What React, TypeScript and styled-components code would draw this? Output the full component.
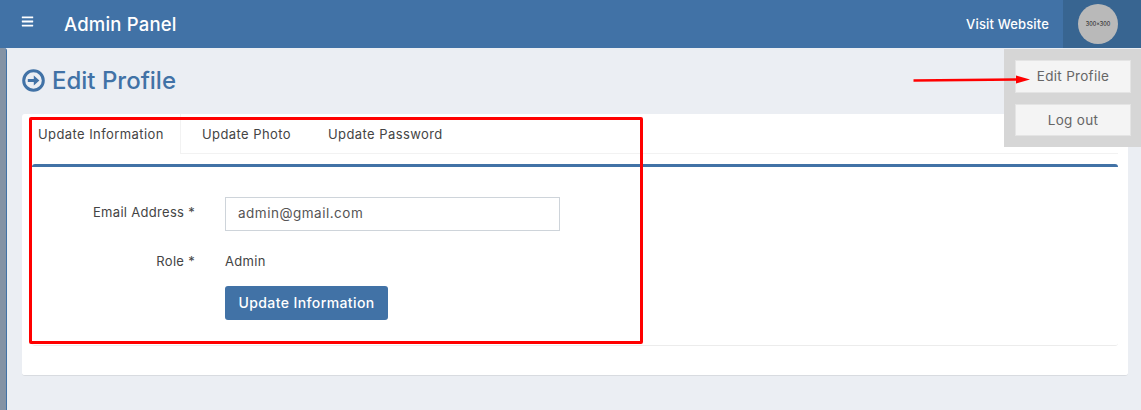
import styled, { createGlobalStyle } from 'styled-components'
import { FaBars } from 'react-icons/fa'

const PRIMARY = '#4172a6'
const FONT = '"Inter", "Liberation Sans", sans-serif'

const GlobalStyle = createGlobalStyle`
	html, body {
		margin: 0;
		padding: 0;
		background: #ebeef3;
		font-family: ${FONT};
		color: #444;
	}
	* {
		box-sizing: border-box;
	}
`

const Page = styled.div`
	position: relative;
	width: 1141px;
	height: 410px;
	overflow: hidden;
	display: flex;
	flex-direction: column;
`

const Header = styled.header`
	height: 48px;
	background: ${PRIMARY};
	display: flex;
	align-items: center;
	color: #fff;
	flex: none;
`

const MenuButton = styled.div`
	width: 64px;
	padding: 0 0 5px 21px;
	display: flex;
	font-size: 13px;
`

const Brand = styled.div`
	font-size: 18.5px;
	font-weight: 500;
	letter-spacing: 0.2px;
	flex: 1;
`

const VisitLink = styled.a`
	font-size: 13px;
	font-weight: 500;
	letter-spacing: 0.15px;
	margin-right: 14px;
`

const UserBox = styled.div`
	width: 78px;
	height: 48px;
	background: #386591;
	display: flex;
	align-items: center;
	padding-left: 15px;
`

const Avatar = styled.div`
	width: 40px;
	height: 40px;
	border-radius: 50%;
	background: #b9b9b9;
	color: #111;
	font-size: 5.5px;
	display: flex;
	align-items: center;
	justify-content: center;
`

const Body = styled.div`
	flex: 1;
	display: flex;
`

const SideEdge = styled.div`
	width: 7px;
	background: #8493a5;
	border-right: 1px solid ${PRIMARY};
	border-top-right-radius: 3px;
	flex: none;
`

const Main = styled.main`
	flex: 1;
	padding: 0 13px 0 15px;
`

const Title = styled.h1`
	height: 66px;
	margin: 0;
	padding-bottom: 1px;
	display: flex;
	align-items: center;
	gap: 7px;
	color: ${PRIMARY};
	font-size: 24px;
	font-weight: 500;
`

const Card = styled.section`
	height: 262px;
	background: #fff;
	border-radius: 3px;
	border-bottom: 1px solid #d8dbe0;
	padding: 0 10px;
`

const TabBar = styled.div`
	height: 40px;
	display: flex;
	border-bottom: 1px solid #f2f2f2;
`

const Tab = styled.div<{ $active?: boolean; $width: number }>`
	height: ${(p) => (p.$active ? '40px' : '39px')};
	padding: 12px 0 0 ${(p) => (p.$active ? '6px' : '21px')};
	width: ${(p) => p.$width}px;
	font-size: 13px;
	letter-spacing: 0.42px;
	white-space: nowrap;
	color: #444;
	background: #fff;
	border-right: ${(p) => (p.$active ? '1px solid #f2f2f2' : 'none')};
`

const Pane = styled.div`
	margin-top: 10px;
	height: 182px;
	border-top: 3px solid ${PRIMARY};
	border-bottom: 1px solid #ececec;
	border-radius: 3px;
	padding-top: 30px;
`

const FormRow = styled.div<{ $height: number; $shift?: number }>`
	display: grid;
	grid-template-columns: 163px 335px;
	column-gap: 30px;
	align-items: center;
	height: ${(p) => p.$height}px;
	padding-top: ${(p) => p.$shift ?? 0}px;
	font-size: 13px;
	letter-spacing: 0.3px;
`

const Label = styled.label<{ $lift?: number }>`
	text-align: right;
	color: #444;
	padding-bottom: ${(p) => p.$lift ?? 0}px;
`

const Input = styled.div`
	height: 34px;
	border: 1px solid #ced4da;
	padding: 0 12px 2px;
	display: flex;
	align-items: center;
	font-size: 13.5px;
	letter-spacing: 0.5px;
	color: #555;
`

const SubmitButton = styled.button`
	grid-column: 2;
	justify-self: start;
	width: 163px;
	height: 34px;
	padding: 0 0 2px;
	border: none;
	border-radius: 3px;
	background: ${PRIMARY};
	color: #fff;
	font-family: ${FONT};
	font-size: 14px;
	font-weight: 500;
	letter-spacing: 0.4px;
`

const Dropdown = styled.div`
	position: absolute;
	top: 49px;
	left: 1004px;
	width: 137px;
	height: 98px;
	background: #d6d6d6;
	padding: 11px 10px 11px 11px;
	display: flex;
	flex-direction: column;
	gap: 11px;
`

const DropdownItem = styled.div`
	height: 33px;
	background: #f4f4f4;
	border: 1px solid #e4e4e4;
	display: flex;
	align-items: center;
	justify-content: center;
	font-size: 13.5px;
	letter-spacing: 0.3px;
	color: #666;
`

const RedBox = styled.div`
	position: absolute;
	left: 29px;
	top: 117px;
	width: 614px;
	height: 227px;
	border: 3px solid #ff0000;
	border-radius: 2px;
	pointer-events: none;
`

const ArrowMark = styled.svg`
	position: absolute;
	left: 912px;
	top: 72px;
`

const TitleIcon = () => (
	<svg width="23" height="23" viewBox="0 0 23 23">
		<circle cx="11.5" cy="11.5" r="9.8" fill="none" stroke={PRIMARY} strokeWidth="3" />
		<path d="M5.8 10h6V6.4l5.6 5.1-5.6 5.1V13h-6z" fill={PRIMARY} />
	</svg>
)

const App = () => {
	return (
		<Page>
			<GlobalStyle />
			<Header>
				<MenuButton>
					<FaBars />
				</MenuButton>
				<Brand>Admin Panel</Brand>
				<VisitLink>Visit Website</VisitLink>
				<UserBox>
					<Avatar>300x300</Avatar>
				</UserBox>
			</Header>
			<Body>
				<SideEdge />
				<Main>
					<Title>
						<TitleIcon />
						Edit Profile
					</Title>
					<Card>
						<TabBar>
							<Tab $active $width={149}>
								Update Information
							</Tab>
							<Tab $width={126}>Update Photo</Tab>
							<Tab $width={150}>Update Password</Tab>
						</TabBar>
						<Pane>
							<FormRow $height={34}>
								<Label $lift={4}>Email Address *</Label>
								<Input>admin@gmail.com</Input>
							</FormRow>
							<FormRow $height={55} $shift={5}>
								<Label>Role *</Label>
								<span>Admin</span>
							</FormRow>
							<FormRow $height={34}>
								<SubmitButton>Update Information</SubmitButton>
							</FormRow>
						</Pane>
					</Card>
				</Main>
			</Body>
			<Dropdown>
				<DropdownItem>Edit Profile</DropdownItem>
				<DropdownItem>Log out</DropdownItem>
			</Dropdown>
			<RedBox />
			<ArrowMark width="120" height="16" viewBox="0 0 120 16">
				<path d="M1.5 8.5 L104 7.5" stroke="#ff0000" strokeWidth="2.4" fill="none" />
				<path d="M104 3.5 L118 7.5 L104 11.5z" fill="#ff0000" />
			</ArrowMark>
		</Page>
	)
}

export default App
